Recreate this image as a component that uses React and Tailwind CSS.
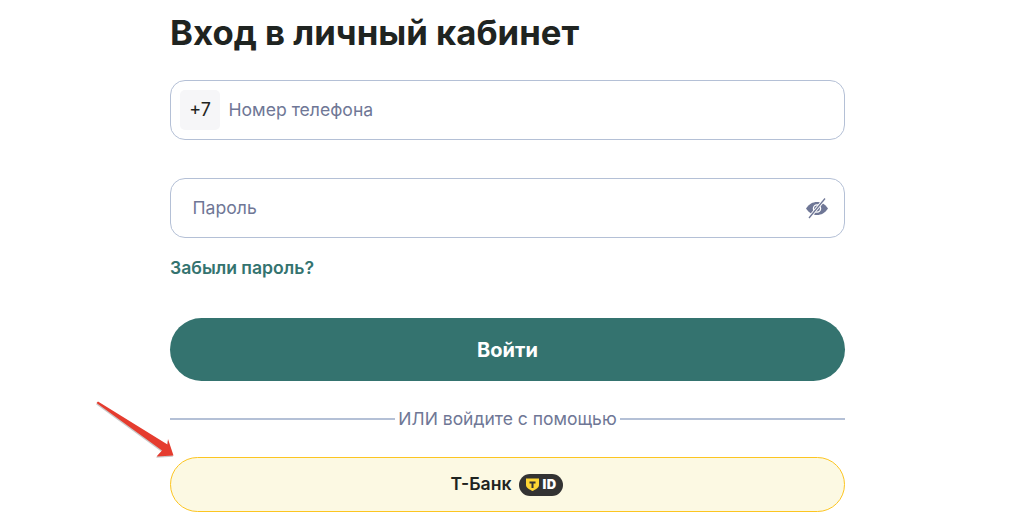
export default function App() {
  return (
    <div className="relative h-[527px] w-[1028px] overflow-hidden bg-white font-['Inter',sans-serif]">
      <div className="ml-[170px] flex w-[675px] flex-col pt-[10px]">
        <h1 className="h-[45px] text-[34.7px] leading-[44px] font-bold text-[#1f2421]">Вход в личный кабинет</h1>

        <div className="mt-[25px] flex h-[60px] items-center rounded-[15px] border border-[#b4c0d6] pl-[9px]">
          <div className="flex h-10 w-10 items-center justify-center rounded-[5px] bg-[#f6f6f8] text-lg text-[#1f2421]">+7</div>
          <span className="ml-[8.5px] text-[17.6px] text-[#6f7796]">Номер телефона</span>
        </div>

        <div className="mt-[38px] flex h-[60px] items-center justify-between rounded-[15px] border border-[#b4c0d6] pr-[15px] pl-[21.5px]">
          <span className="text-[17.6px] text-[#6f7796]">Пароль</span>
          <svg width="24" height="24" viewBox="0 0 24 24">
            <path d="M1 12.500C4 8 7.800 6 12 6s8 2 11 6.500C20 17 16.200 19 12 19s-8-2-11-6.500Z" fill="#6f7796" />
            <circle cx="12" cy="12.500" r="3.600" fill="none" stroke="#fff" strokeWidth="1.300" />
            <path d="M20 2.500 4 22" stroke="#fff" strokeWidth="3.200" />
            <path d="M20 2.500 4 22" stroke="#6f7796" strokeWidth="1.300" />
          </svg>
        </div>

        <a className="mt-[19px] h-[22px] text-[17.6px] leading-[22px] font-semibold text-[#34736f]">Забыли пароль?</a>

        <button className="mt-[39px] h-[63px] rounded-[32px] bg-[#34736f] text-[20px] leading-[64px] font-bold text-white">Войти</button>

        <div className="mt-[26px] flex h-[24px] items-center gap-[3px]">
          <div className="h-0.5 flex-1 bg-[#b4c0d6]" />
          <span className="text-[17.5px] leading-[24px] text-[#6f7796]">ИЛИ войдите с помощью</span>
          <div className="h-0.5 flex-1 bg-[#b4c0d6]" />
        </div>

        <button className="mt-[26px] flex h-[55px] items-center justify-center gap-[7px] rounded-[28px] border border-[#fcc521] bg-[#fcf9e3] pr-[2px]">
          <span className="text-[17.6px] font-semibold text-[#1f2421]">Т-Банк</span>
          <span className="flex h-[22px] w-[44px] items-center rounded-full bg-[#333333] pl-[6px]">
            <svg width="15" height="15" viewBox="0 0 15 15">
              <path d="M1 1.500h13v6.500c0 3-3.500 4.500-6.500 6C4.500 12.500 1 11 1 8Z" fill="#fcd535" />
              <path d="M4.500 4.500h6v2H8.500v4.500h-2V6.500h-2Z" fill="#333333" />
            </svg>
            <span className="ml-[3px] text-[13px] leading-none font-black tracking-[0.5px] text-white">ID</span>
          </span>
        </button>
      </div>

      <svg className="absolute top-[400px] left-[95px]" width="82" height="60" viewBox="0 0 82 60">
        <path d="M1.500 3 3 1.500 72.500 44.500 73 39 78.500 55.500 61.500 56.500 67 50.500Z" fill="#c9c9c9" transform="translate(-0.500 1.200)" />
        <path d="M1.500 3 3 1.500 72.500 44.500 73 39 78.500 55.500 61.500 56.500 67 50.500Z" fill="#e53c2f" />
      </svg>
    </div>
  );
}
